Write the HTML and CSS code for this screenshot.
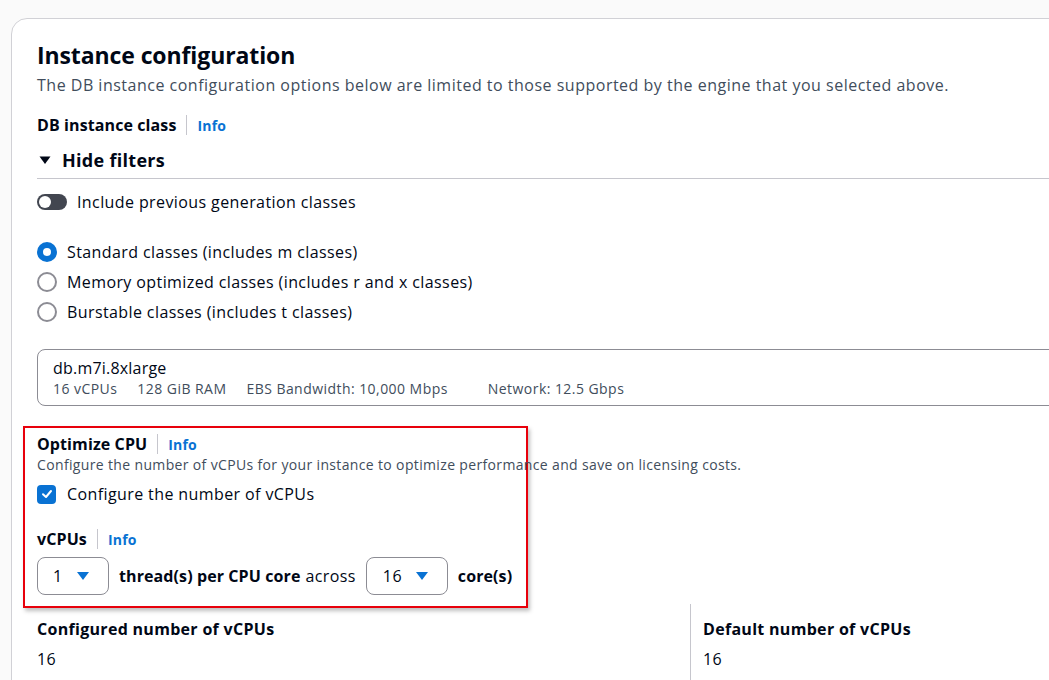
FILE: index.html
```html
<!DOCTYPE html>
<html>
<head>
<meta charset="utf-8">
<link rel="stylesheet" href="styles.css">
</head>
<body>
<div class="card">
  <h1 class="title">Instance configuration</h1>
  <p class="desc">The DB instance configuration options below are limited to those supported by the engine that you selected above.</p>

  <div class="label-row first">
    <span class="label">DB instance class</span><span class="sep"></span><a class="info">Info</a>
  </div>

  <div class="expander">
    <svg class="caret" width="12" height="12" viewBox="0 0 12 12"><path d="M0.5 2.5 L11.5 2.5 L6 10 Z" fill="#000716"/></svg>
    <span>Hide filters</span>
  </div>
  <div class="rule"></div>

  <div class="toggle-row">
    <span class="toggle"><span class="knob"></span></span>
    <span>Include previous generation classes</span>
  </div>

  <div class="radios">
    <div class="radio-row"><span class="radio on"></span><span>Standard classes (includes m classes)</span></div>
    <div class="radio-row"><span class="radio"></span><span>Memory optimized classes (includes r and x classes)</span></div>
    <div class="radio-row"><span class="radio"></span><span>Burstable classes (includes t classes)</span></div>
  </div>

  <div class="select-box">
    <div class="select-name">db.m7i.8xlarge</div>
    <div class="select-tags">
      <span>16 vCPUs</span><span>128 GiB RAM</span><span>EBS Bandwidth: 10,000 Mbps</span><span class="net">Network: 12.5 Gbps</span>
    </div>
  </div>

  <div class="highlight">
    <div class="label-row">
      <span class="label">Optimize CPU</span><span class="sep"></span><a class="info">Info</a>
    </div>
    <div class="small-desc">Configure the number of vCPUs for your instance to optimize performance and save on licensing costs.</div>
    <div class="check-row">
      <span class="checkbox"><svg width="12" height="12" viewBox="0 0 12 12"><path d="M2 6.2 L5 9 L10 3" fill="none" stroke="#fff" stroke-width="2" stroke-linecap="round" stroke-linejoin="round"/></svg></span>
      <span>Configure the number of vCPUs</span>
    </div>
    <div class="label-row vcpu">
      <span class="label">vCPUs</span><span class="sep"></span><a class="info">Info</a>
    </div>
    <div class="threads">
      <span class="dd w1"><span>1</span><svg width="14" height="10" viewBox="0 0 14 10"><path d="M1 1 L13 1 L7 9 Z" fill="#0972d3"/></svg></span>
      <span class="bold">thread(s) per CPU core</span><span class="plain">across</span>
      <span class="dd w2"><span>16</span><svg width="14" height="10" viewBox="0 0 14 10"><path d="M1 1 L13 1 L7 9 Z" fill="#0972d3"/></svg></span>
      <span class="bold">core(s)</span>
    </div>
  </div>

  <div class="cols">
    <div class="col left">
      <div class="col-label">Configured number of vCPUs</div>
      <div class="col-value">16</div>
    </div>
    <div class="col right">
      <div class="col-label">Default number of vCPUs</div>
      <div class="col-value">16</div>
    </div>
  </div>
</div>
</body>
</html>
```

FILE: styles.css
```css
html, body {
  margin: 0;
  padding: 0;
  background: #fafafa;
  overflow: hidden;
  height: 680px;
}
body {
  font-family: "Open Sans", "Noto Sans", sans-serif;
  color: #000716;
  font-size: 16px;
  letter-spacing: 0.4px;
}
.card {
  margin: 18px 0 0 11px;
  width: 1120px;
  height: 760px;
  background: #fff;
  border: 1px solid #d1d1d6;
  border-radius: 16px;
  box-sizing: border-box;
  padding: 20px 0 0 25px;
}
.title {
  margin: 0;
  font-size: 23px;
  line-height: 32px;
  font-weight: 700;
  letter-spacing: -0.1px;
}
.desc {
  margin: 3px 0 0;
  font-size: 16px;
  line-height: 22px;
  color: #414d5c;
  letter-spacing: 0.5px;
}
.label-row {
  display: flex;
  align-items: center;
  height: 22px;
}
.label-row.first { margin-top: 18px; }
.label {
  font-weight: 700;
  font-size: 16px;
  letter-spacing: 0.1px;
}
.sep {
  width: 1px;
  height: 20px;
  background: #c6c6cd;
  margin: 0 10px;
}
.info {
  color: #0972d3;
  font-weight: 700;
  font-size: 14px;
  letter-spacing: 0.2px;
}
.expander {
  display: flex;
  align-items: center;
  gap: 11px;
  margin-top: 12px;
  height: 24px;
  font-size: 18px;
  font-weight: 700;
  letter-spacing: 0.3px;
}
.caret { margin-left: 2px; }
.rule {
  height: 1px;
  background: #c6c6cd;
  margin-top: 6px;
}
.toggle-row {
  display: flex;
  align-items: center;
  gap: 10px;
  margin-top: 12px;
  height: 22px;
}
.toggle {
  width: 30px;
  height: 16px;
  border-radius: 8px;
  background: #424650;
  position: relative;
  display: inline-block;
}
.knob {
  position: absolute;
  left: 2px;
  top: 2px;
  width: 12px;
  height: 12px;
  border-radius: 50%;
  background: #fff;
}
.radios {
  margin-top: 24px;
  display: flex;
  flex-direction: column;
}
.radio-row {
  display: flex;
  align-items: center;
  gap: 10px;
  height: 30px;
}
.radio {
  border-radius: 50%;
  border: 2px solid #8c8c94;
  box-sizing: border-box;
  width: 20px;
  height: 20px;
}
.radio.on {
  border: 6px solid #0972d3;
  background: #fff;
}
.select-box {
  margin-top: 22px;
  width: 1100px;
  height: 57px;
  border: 1px solid #8c8c94;
  border-radius: 8px;
  box-sizing: border-box;
  padding: 7px 15px 0;
}
.select-name {
  font-size: 16px;
  line-height: 22px;
  letter-spacing: 0.2px;
}
.select-tags {
  display: flex;
  gap: 20px;
  font-size: 14px;
  line-height: 20px;
  color: #414d5c;
  letter-spacing: 0.45px;
}
.select-tags .net { margin-left: 20px; }
.highlight {
  margin: 20px 0 0 -14px;
  width: 505px;
  height: 182px;
  box-sizing: border-box;
  border: 2px solid #e8000b;
  padding: 5px 12px 0;
  box-shadow: 2px 3px 4px rgba(0,0,0,0.25);
  position: relative;
  z-index: 1;
}
.small-desc {
  font-size: 14px;
  line-height: 20px;
  color: #414d5c;
  white-space: nowrap;
  letter-spacing: 0.35px;
}
.check-row {
  display: flex;
  align-items: center;
  gap: 11px;
  margin-top: 8px;
  height: 22px;
}
.checkbox {
  width: 19px;
  height: 19px;
  border-radius: 4px;
  background: #0972d3;
  display: flex;
  align-items: center;
  justify-content: center;
}
.vcpu { margin-top: 23px; }
.threads {
  display: flex;
  align-items: center;
  margin-top: 7px;
  height: 38px;
  white-space: nowrap;
}
.threads > * { flex-shrink: 0; }
.dd {
  height: 38px;
  border: 1px solid #8c8c94;
  border-radius: 8px;
  box-sizing: border-box;
  display: flex;
  align-items: center;
  font-size: 16px;
}
.dd.w1 { width: 72px; padding-left: 15px; gap: 13px; }
.dd.w2 { width: 82px; padding-left: 16px; gap: 13px; }
.bold { font-weight: 700; margin-left: 10px; letter-spacing: 0.1px; }
.plain { margin-left: 5px; margin-right: 10px; }
.cols {
  display: flex;
  margin-top: -4px;
  margin-left: -25px;
}
.col {
  padding-top: 14px;
  height: 80px;
}
.col.left {
  width: 653px;
  padding-left: 25px;
  border-right: 1px solid #c6c6cd;
}
.col.right {
  padding-left: 12px;
}
.col-label {
  font-weight: 700;
  font-size: 16px;
  line-height: 22px;
  letter-spacing: 0.3px;
}
.col-value {
  margin-top: 8px;
  font-size: 16px;
  line-height: 22px;
}
```
